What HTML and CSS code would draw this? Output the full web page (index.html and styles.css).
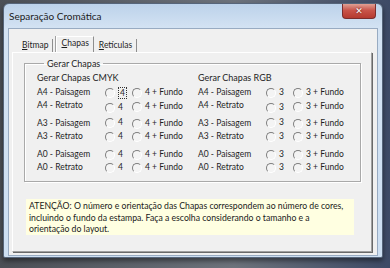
FILE: index.html
```html
<!DOCTYPE html>
<html lang="pt">
<head>
    <meta charset="UTF-8">
    <title>Separação Cromática</title>
    <link rel="stylesheet" href="styles.css">
</head>
<body>
    <div class="window">
        <div class="titlebar">
            <span class="title">Separação Cromática</span>
            <span class="close">&#x2715;</span>
        </div>
        <div class="client">
            <div class="tabs">
                <span class="tab"><u>B</u>itmap</span>
                <span class="tab active"><u>C</u>hapas</span>
                <span class="tab"><u>R</u>etículas</span>
            </div>
            <div class="panel">
                <fieldset class="group">
                    <legend>Gerar Chapas</legend>
                    <div class="columns">
                        <div class="col cmyk">
                            <div class="head">Gerar Chapas CMYK</div>
                            <div class="row"><span>A4 - Paisagem</span><span class="opt"><i class="radio"></i><span class="focus">4</span></span><span class="opt"><i class="radio"></i>4 + Fundo</span></div>
                            <div class="row"><span>A4 - Retrato</span><span class="opt low"><i class="radio"></i>4</span><span class="opt"><i class="radio"></i>4 + Fundo</span></div>
                            <div class="row pair"><span>A3 - Paisagem</span><span class="opt high"><i class="radio"></i>4</span><span class="opt"><i class="radio"></i>4 + Fundo</span></div>
                            <div class="row"><span>A3 - Retrato</span><span class="opt"><i class="radio"></i>4</span><span class="opt"><i class="radio"></i>4 + Fundo</span></div>
                            <div class="row pair"><span>A0 - Paisagem</span><span class="opt"><i class="radio"></i>4</span><span class="opt"><i class="radio"></i>4 + Fundo</span></div>
                            <div class="row"><span>A0 - Retrato</span><span class="opt"><i class="radio"></i>4</span><span class="opt"><i class="radio"></i>4 + Fundo</span></div>
                        </div>
                        <div class="col rgb">
                            <div class="head">Gerar Chapas RGB</div>
                            <div class="row"><span>A4 - Paisagem</span><span class="opt"><i class="radio"></i>3</span><span class="opt"><i class="radio"></i>3 + Fundo</span></div>
                            <div class="row"><span>A4 - Retrato</span><span class="opt low"><i class="radio"></i>3</span><span class="opt"><i class="radio"></i>3 + Fundo</span></div>
                            <div class="row pair"><span>A3 - Paisagem</span><span class="opt high"><i class="radio"></i>3</span><span class="opt"><i class="radio"></i>3 + Fundo</span></div>
                            <div class="row"><span>A3 - Retrato</span><span class="opt"><i class="radio"></i>3</span><span class="opt"><i class="radio"></i>3 + Fundo</span></div>
                            <div class="row pair"><span>A0 - Paisagem</span><span class="opt"><i class="radio"></i>3</span><span class="opt"><i class="radio"></i>3 + Fundo</span></div>
                            <div class="row"><span>A0 - Retrato</span><span class="opt"><i class="radio"></i>3</span><span class="opt"><i class="radio"></i>3 + Fundo</span></div>
                        </div>
                    </div>
                </fieldset>
                <p class="note">ATENÇÃO: O número e orientação das Chapas correspondem ao número de cores, incluindo o fundo da estampa. Faça a escolha considerando o tamanho e a orientação do layout.</p>
            </div>
        </div>
    </div>
</body>
</html>
```

FILE: styles.css
```css
body {
    margin: 0;
    padding: 3px 0 0 3px;
    background: linear-gradient(to right, #4b4f56 0%, #6d737c 60%, #3d4a66 100%);
    font-family: Lato, "Liberation Sans", sans-serif;
    font-size: 8.5px;
    color: #1e1e1e;
    height: 268px;
    box-sizing: border-box;
    overflow: hidden;
}

.window {
    width: 380px;
    height: 255px;
    box-sizing: border-box;
    border: 1px solid #56657a;
    border-radius: 6px 6px 2px 2px;
    background: linear-gradient(to bottom, #bcd2ea 0%, #d4e3f3 25px, #cddff2 100%);
    box-shadow: 0 3px 5px rgba(0, 0, 0, 0.45);
}

.titlebar {
    height: 24px;
    display: flex;
    justify-content: space-between;
    align-items: flex-start;
}

.title {
    margin: 6px 0 0 5px;
    font-size: 10px;
    color: #1a1a1a;
}

.close {
    width: 34px;
    height: 15px;
    margin-right: 6px;
    border: 1px solid #7a2d2d;
    border-top: none;
    border-radius: 0 0 4px 4px;
    box-sizing: border-box;
    background: linear-gradient(to bottom, #e0a094 0%, #c9544a 45%, #b53a30 100%);
    color: #fff;
    font-family: "DejaVu Sans", sans-serif;
    font-size: 9px;
    font-weight: bold;
    text-align: center;
    line-height: 14px;
    text-shadow: 0 0 2px #4a1010;
}

.client {
    margin: 0 4px 0 4px;
    height: 226px;
    border: 1px solid #98abc2;
    background: #f0f0f0;
}

.tabs {
    display: flex;
    align-items: flex-end;
    height: 23px;
    padding-left: 10px;
}

.tab {
    height: 13px;
    padding: 0 4px 0 3px;
    border-right: 1px solid #8e8e8e;
    line-height: 12px;
}

.tab.active {
    height: 15px;
    padding: 0 4px;
    margin: 0 2px 0 3px;
    border-left: 1px solid #ffffff;
    border-top: 1px solid #ffffff;
    box-shadow: -1px 0 0 #a0a0a0;
}

.panel {
    margin: 0 5px 0 3px;
    height: 193px;
    border-top: 1px solid #ffffff;
    border-left: 1px solid #ffffff;
    border-right: 1px solid #a0a0a0;
    border-bottom: 1px solid #a0a0a0;
    box-shadow: 1px 1px 0 #696969;
    padding: 5px 10px 0 11px;
}

.group {
    margin: 0;
    padding: 2px 0 8px 12px;
    height: 112px;
    border: 1px solid #a9a9a9;
    box-shadow: 1px 1px 0 #ffffff, inset 1px 1px 0 #ffffff;
}

.group legend {
    padding: 0 3px;
    margin-left: 7px;
    line-height: 11px;
    font-size: 9px;
}

.columns {
    display: flex;
}

.col {
    width: 161px;
}

.head {
    height: 14px;
    line-height: 14px;
    margin-bottom: 1px;
    font-size: 9px;
}

.row {
    display: grid;
    grid-template-columns: 68px 27px auto;
    height: 13px;
    line-height: 13px;
}

.row.pair {
    margin-top: 5px;
}

.opt {
    display: flex;
    align-items: center;
}

.opt.low {
    margin-top: 2px;
}

.opt.high {
    margin-top: -2px;
}

.radio {
    display: inline-block;
    width: 8px;
    height: 8px;
    margin-right: 3px;
    border: 1px solid;
    border-color: #7e7e7e #ffffff #ffffff #7e7e7e;
    border-radius: 50%;
    background: #f4f4f4;
}

.focus {
    border: 1px dotted #333;
    padding: 0 1px;
    line-height: 10px;
}

.note {
    margin: 17px 7px 0 2px;
    padding: 1px 3px 0 3px;
    background: #ffffe1;
    font-size: 8.7px;
    line-height: 11.5px;
    color: #1a1a1a;
}
```
